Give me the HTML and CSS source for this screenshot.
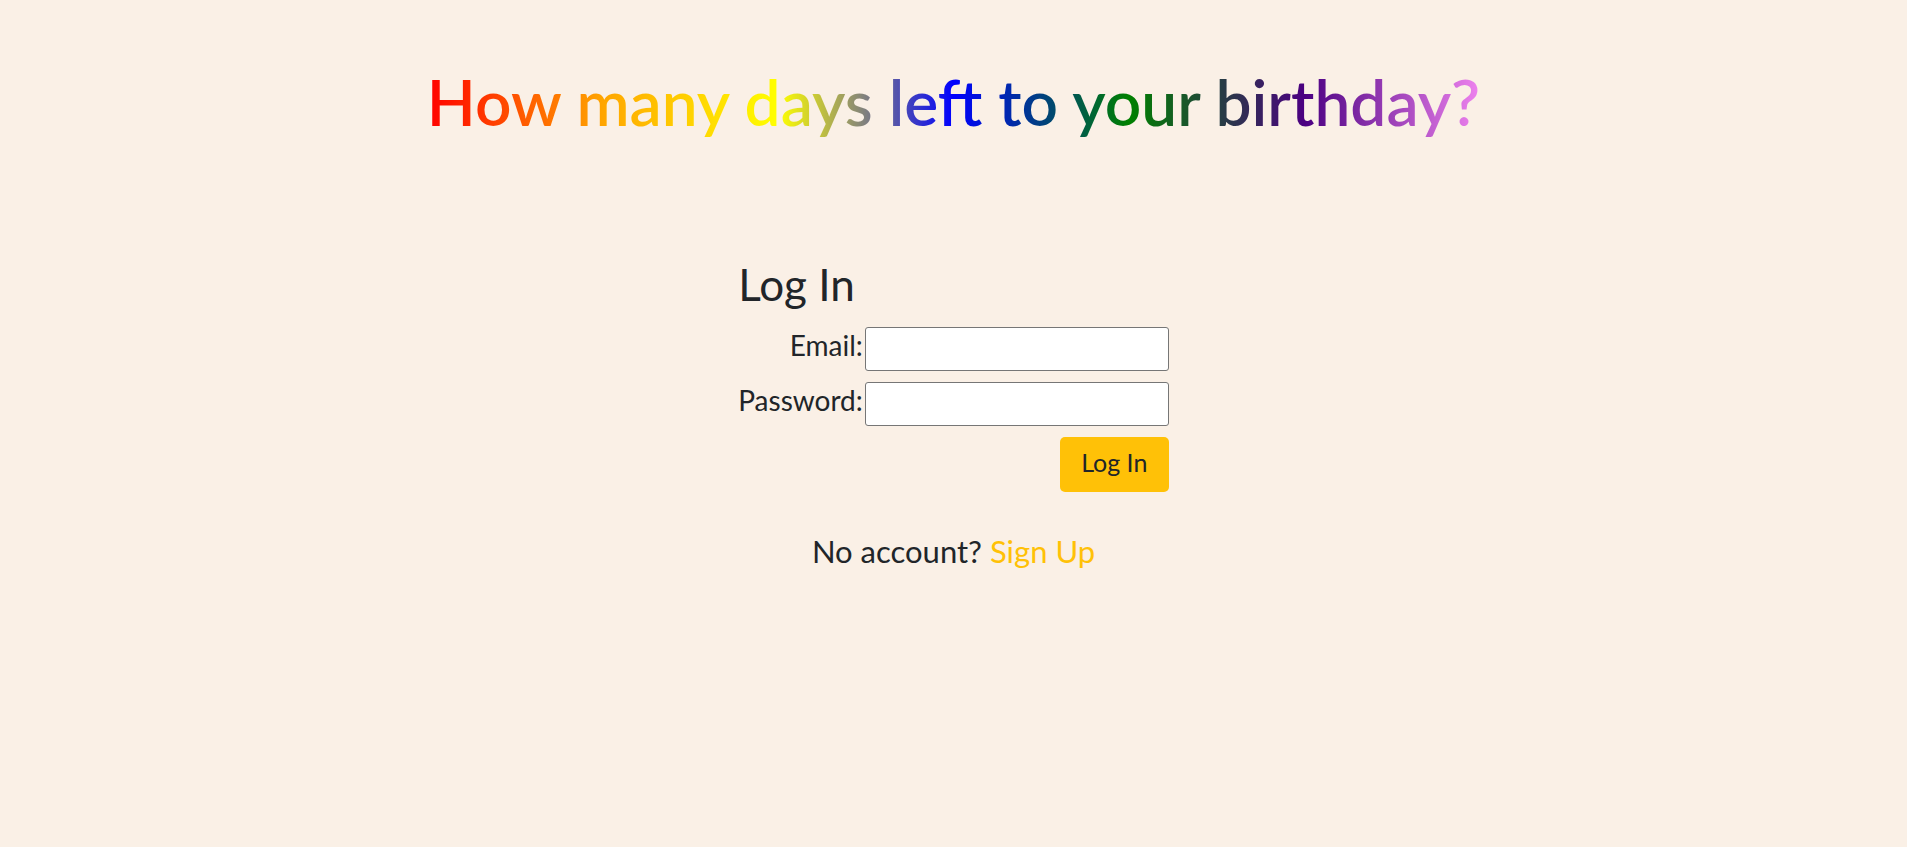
FILE: index.html
```html
<!DOCTYPE html>
<html lang="en">
<head>
<meta charset="utf-8">
<title>Birthday countdown</title>
<link rel="stylesheet" href="styles.css">
</head>
<body>
<header class="top">
  <h1 class="rainbow">How many days left to your birthday?</h1>
</header>
<main class="auth">
  <section class="card">
    <h2 class="card-title">Log In</h2>
    <form class="login-form">
      <label class="lbl" for="email">Email:</label>
      <input class="field" id="email" type="email">
      <label class="lbl" for="password">Password:</label>
      <input class="field" id="password" type="password">
      <div class="actions">
        <button class="btn" type="button">Log In</button>
      </div>
    </form>
  </section>
  <p class="signup">No account? <a class="signup-link" href="#">Sign Up</a></p>
</main>
</body>
</html>
```
FILE: styles.css
```css
html, body {
  margin: 0;
  padding: 0;
}
body {
  background: #faf0e6;
  color: #212529;
  font-family: "Lato", "Noto Sans", sans-serif;
}
.top {
  display: flex;
  justify-content: center;
  padding-top: 66px;
}
.rainbow {
  margin: 0;
  font-size: 64px;
  font-weight: 600;
  line-height: 72px;
  background: linear-gradient(to right, red, orange, yellow, blue, green, indigo, violet);
  -webkit-background-clip: text;
  background-clip: text;
  color: transparent;
}
.auth {
  display: flex;
  flex-direction: column;
  align-items: center;
  margin-top: 122px;
}
.card {
  display: flex;
  flex-direction: column;
}
.card-title {
  margin: 0 0 19px;
  font-size: 44px;
  font-weight: 400;
  line-height: 48px;
}
.login-form {
  display: grid;
  grid-template-columns: auto 304px;
  column-gap: 2px;
  row-gap: 11px;
  align-items: center;
}
.lbl {
  text-align: right;
  font-size: 28px;
  padding-bottom: 8px;
}
.field {
  box-sizing: border-box;
  height: 44px;
  width: 304px;
  margin: 0;
  background: #fff;
  border: 1px solid #767676;
  border-radius: 3px;
}
.actions {
  grid-column: 2;
  display: flex;
  justify-content: flex-end;
}
.btn {
  box-sizing: border-box;
  width: 109px;
  height: 55px;
  padding: 0 0 6px;
  border: 0;
  border-radius: 5px;
  background: #ffc107;
  color: #212529;
  font-family: inherit;
  font-size: 25px;
}
.signup {
  margin: 40px 0 0;
  font-size: 31px;
}
.signup-link {
  color: #ffc107;
  text-decoration: none;
}
```
